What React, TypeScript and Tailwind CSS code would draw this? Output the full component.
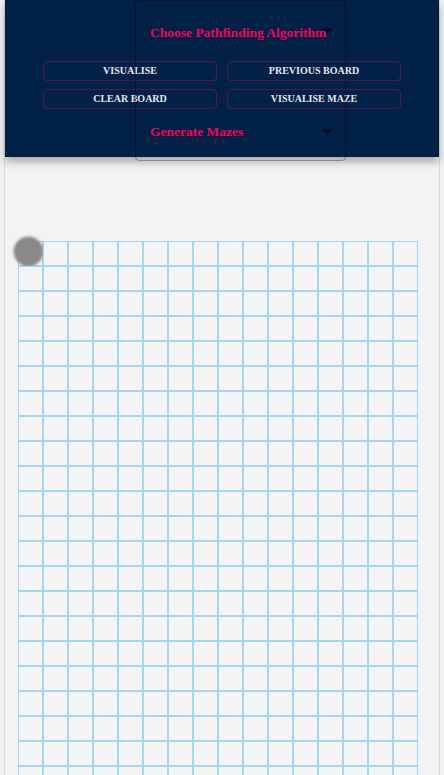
import React from "react";

const COLS = 16;
const ROWS = 22;

const buttons = ["Visualise", "Previous Board", "Clear Board", "Visualise Maze"];

function Arrow() {
  return (
    <svg className="w-[11px] h-[6px] shrink-0" viewBox="0 0 10 5">
      <path d="M0 0 L10 0 L5 5 Z" fill="rgba(0,0,0,0.6)" />
    </svg>
  );
}

function SelectRow({ label }: { label: string }) {
  return (
    <div className="ml-[145px] w-[183px] flex items-center justify-between text-[13.5px] leading-[16px] text-[#f50057]">
      <span className="whitespace-nowrap">{label}</span>
      <Arrow />
    </div>
  );
}

function Header() {
  return (
    <div className="relative h-[157px] bg-[#022146] shadow-[0_5px_8px_rgba(0,0,0,0.3)] font-['Liberation_Serif',serif] font-bold">
      {/* outlined select, drawn over the panel */}
      <div className="absolute left-[130px] top-0 w-[211px] h-[161px] rounded-[4px] border border-black/30 pointer-events-none" />
      <div className="pt-[25px]">
        <div className="ml-[145px] w-[183px] relative text-[13.5px] leading-[16px] text-[#f50057]">
          <span className="whitespace-nowrap">Choose Pathfinding Algorithm</span>
          <svg className="absolute right-0 top-[3px] w-[11px] h-[6px]" viewBox="0 0 10 5">
            <path d="M0 0 L10 0 L5 5 Z" fill="rgba(0,0,0,0.6)" />
          </svg>
        </div>
      </div>
      <div className="mt-[20px] grid grid-cols-2 gap-x-[10px] gap-y-[8px] px-[38px]">
        {buttons.map((b) => (
          <button
            key={b}
            className="h-[20px] rounded-[4px] border border-[#f50057]/35 text-[10px] uppercase text-[#e6e6ee] leading-none"
          >
            {b}
          </button>
        ))}
      </div>
      <div className="mt-[15px]">
        <SelectRow label="Generate Mazes" />
      </div>
    </div>
  );
}

function Grid() {
  return (
    <div className="grid grid-cols-[repeat(16,25px)] w-[400px]">
      {Array.from({ length: ROWS * COLS }).map((_, i) => (
        <div key={i} className="relative w-[25px] h-[25px] border border-[#a3d6f2] bg-[#f4f4f4]">
          {i === 0 && (
            <div className="absolute -left-[5px] -top-[5px] w-[29px] h-[29px] rounded-full bg-[#898989] blur-[0.8px] shadow-[0_0_3px_rgba(0,0,0,0.35)]" />
          )}
        </div>
      ))}
    </div>
  );
}

export default function App() {
  return (
    <div className="h-[775px] overflow-hidden bg-[#f1f1f1]">
      <div className="ml-[4px] w-[436px] h-full border-x border-[#dadada] bg-[#f3f3f3]">
        <Header />
        <div className="pt-[84px] pl-[13px]">
          <Grid />
        </div>
      </div>
    </div>
  );
}
